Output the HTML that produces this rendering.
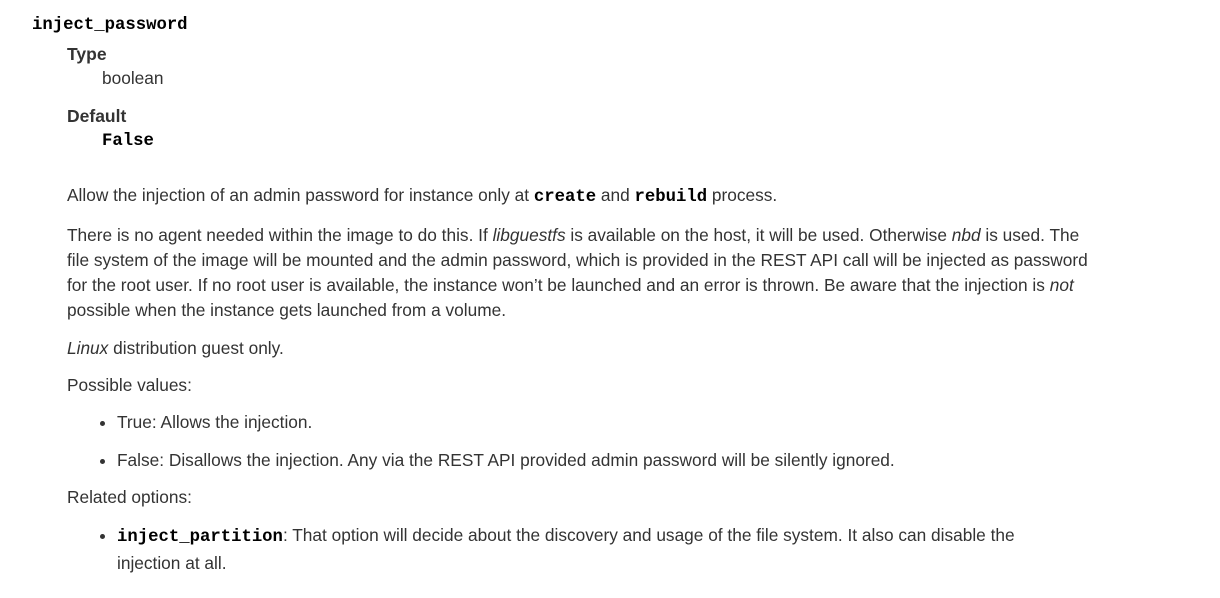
<!DOCTYPE html>
<html><head><meta charset="utf-8"><style>
body{margin:0;background:#fff;width:1220px;height:598px;position:relative;font-family:"Liberation Sans",Arial,sans-serif;color:#333;font-size:17.3px}
.l{position:absolute;white-space:nowrap;line-height:20px}
code,.m{font-family:"Liberation Mono",monospace;font-weight:bold;color:#000;font-size:17.3px}
b{font-weight:bold;font-size:17.5px}
.dot{position:absolute;width:5px;height:5px;border-radius:50%;background:#333}
</style></head><body>
<div class="l m" style="left:32px;top:16px">inject_password</div>
<div class="l" style="left:67px;top:44px"><b>Type</b></div>
<div class="l" style="left:102px;top:68px">boolean</div>
<div class="l" style="left:67px;top:106px"><b>Default</b></div>
<div class="l m" style="left:102px;top:132px">False</div>
<div class="l" style="left:67px;top:185px">Allow the injection of an admin password for instance only at <code>create</code> and <code>rebuild</code> process.</div>
<div class="l" style="left:67px;top:225px">There is no agent needed within the image to do this. If <i>libguestfs</i> is available on the host, it will be used. Otherwise <i>nbd</i> is used. The</div>
<div class="l" style="left:67px;top:250px">file system of the image will be mounted and the admin password, which is provided in the REST API call will be injected as password</div>
<div class="l" style="left:67px;top:275px">for the root user. If no root user is available, the instance won’t be launched and an error is thrown. Be aware that the injection is <i>not</i></div>
<div class="l" style="left:67px;top:300px">possible when the instance gets launched from a volume.</div>
<div class="l" style="left:67px;top:338px"><i>Linux</i> distribution guest only.</div>
<div class="l" style="left:67px;top:375px">Possible values:</div>
<div class="dot" style="left:100px;top:421px"></div>
<div class="l" style="left:117px;top:412px">True: Allows the injection.</div>
<div class="dot" style="left:100px;top:459px"></div>
<div class="l" style="left:117px;top:450px">False: Disallows the injection. Any via the REST API provided admin password will be silently ignored.</div>
<div class="l" style="left:67px;top:487px">Related options:</div>
<div class="dot" style="left:100px;top:534px"></div>
<div class="l" style="left:117px;top:525px"><code>inject_partition</code>: That option will decide about the discovery and usage of the file system. It also can disable the</div>
<div class="l" style="left:117px;top:553px">injection at all.</div>
</body></html>
